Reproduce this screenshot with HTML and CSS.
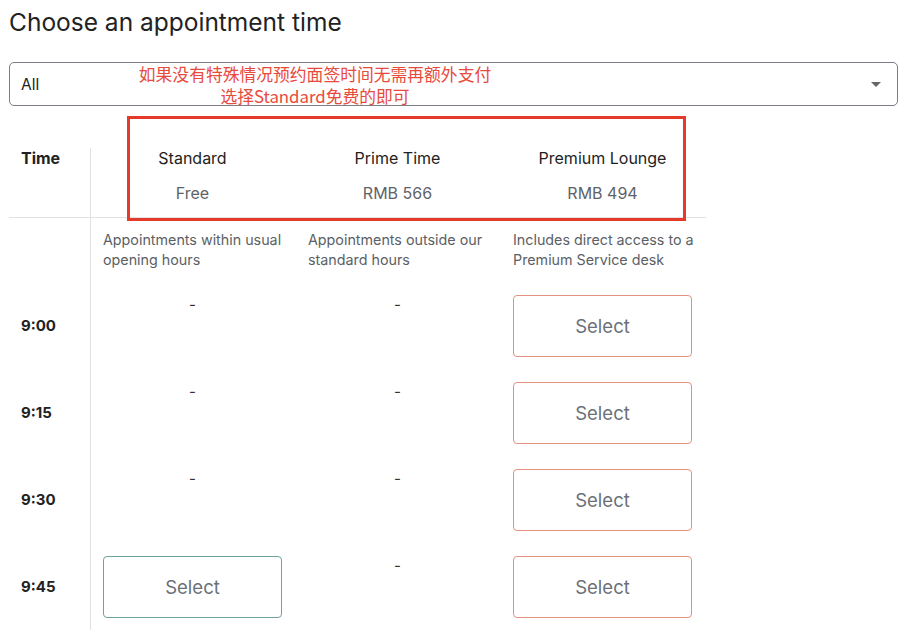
FILE: index.html
```html
<!DOCTYPE html>
<html lang="en">
<head>
<meta charset="utf-8">
<title>Choose an appointment time</title>
<link rel="stylesheet" href="styles.css">
</head>
<body>
<div class="page">
  <h1 class="title">Choose an appointment time</h1>
  <div class="select-wrap">
    <div class="select">
      <span class="select-value">All</span>
      <span class="caret"></span>
    </div>
    <div class="note">如果没有特殊情况预约面签时间无需再额外支付<br>选择Standard免费的即可</div>
  </div>

  <div class="table">
    <div class="highlight"></div>
    <div class="row head">
      <div class="tcell head-time">Time</div>
      <div class="cell head-cell"><div class="name">Standard</div><div class="price">Free</div></div>
      <div class="cell head-cell"><div class="name">Prime Time</div><div class="price">RMB 566</div></div>
      <div class="cell head-cell"><div class="name">Premium Lounge</div><div class="price">RMB 494</div></div>
    </div>
    <div class="row desc">
      <div class="tcell"></div>
      <div class="cell desc-cell">Appointments within usual opening hours</div>
      <div class="cell desc-cell">Appointments outside our standard hours</div>
      <div class="cell desc-cell">Includes direct access to a Premium Service desk</div>
    </div>
    <div class="row slot">
      <div class="tcell time">9:00</div>
      <div class="cell"><div class="dash">-</div></div>
      <div class="cell"><div class="dash">-</div></div>
      <div class="cell"><button class="btn btn-premium">Select</button></div>
    </div>
    <div class="row slot">
      <div class="tcell time">9:15</div>
      <div class="cell"><div class="dash">-</div></div>
      <div class="cell"><div class="dash">-</div></div>
      <div class="cell"><button class="btn btn-premium">Select</button></div>
    </div>
    <div class="row slot">
      <div class="tcell time">9:30</div>
      <div class="cell"><div class="dash">-</div></div>
      <div class="cell"><div class="dash">-</div></div>
      <div class="cell"><button class="btn btn-premium">Select</button></div>
    </div>
    <div class="row slot">
      <div class="tcell time">9:45</div>
      <div class="cell"><button class="btn btn-standard">Select</button></div>
      <div class="cell"><div class="dash">-</div></div>
      <div class="cell"><button class="btn btn-premium">Select</button></div>
    </div>
  </div>
</div>
</body>
</html>
```
FILE: styles.css
```css
* { box-sizing: border-box; }
html, body { margin: 0; padding: 0; background: #fff; }
body {
  font-family: Inter, "Noto Sans", "Liberation Sans", sans-serif;
  color: #222;
  width: 918px;
  height: 636px;
  overflow: hidden;
}
.page { padding: 0 9px; }
.title {
  margin: 8px 0 0;
  font-size: 24.5px;
  line-height: 29px;
  font-weight: 400;
  color: #222;
  letter-spacing: 0;
}
.select-wrap { position: relative; margin-top: 25px; width: 889px; }
.select {
  height: 44px;
  border: 1px solid #7b7f86;
  border-radius: 5px;
  display: flex;
  align-items: center;
  justify-content: space-between;
  padding: 0 16px 0 11px;
}
.select-value { font-size: 15.5px; color: #222; }
.caret {
  width: 0; height: 0;
  border-left: 5px solid transparent;
  border-right: 5px solid transparent;
  border-top: 5px solid #666;
}
.note {
  position: absolute;
  left: 81px;
  top: 1px;
  width: 450px;
  text-align: center;
  font-family: "Noto Sans CJK SC", "Noto Sans", sans-serif;
  font-size: 16.8px;
  line-height: 22px;
  color: #e84a3c;
}
.table { position: relative; margin-top: 42px; width: 697px; }
.highlight {
  position: absolute;
  left: 118px;
  top: -32px;
  width: 559px;
  height: 105px;
  border: 3px solid #e5392a;
  pointer-events: none;
}
.row { display: grid; grid-template-columns: 82px 205px 205px 205px; }
.tcell { border-right: 1px solid #e0e0e0; padding-left: 12px; }
.cell { padding: 0 14px 0 12px; }
.head { border-bottom: 1px solid #e2e2e2; height: 70px; }
.head-time { font-weight: 700; font-size: 16px; line-height: 20px; }
.head-cell { text-align: center; font-size: 16px; line-height: 20px; }
.name { color: #222; }
.price { color: #5f6368; margin-top: 15px; }
.desc { height: 64px; }
.cell.desc-cell { padding: 12px 4px 0 12px; font-size: 14.3px; line-height: 20px; color: #5b5f66; }
.slot { height: 87px; }
.slot .cell { padding-top: 13px; }
.time { font-weight: 700; font-size: 15px; display: flex; align-items: center; }
.dash { text-align: center; font-size: 15px; line-height: 20px; color: #333; }
.btn {
  display: block;
  width: 179px;
  height: 62px;
  background: #fff;
  border-radius: 4px;
  font-family: Inter, "Noto Sans", sans-serif;
  font-size: 18.5px;
  color: #6b7078;
  cursor: pointer;
}
.btn-premium { border: 1.5px solid #e2917f; }
.btn-standard { border: 1.5px solid #6fa39d; }
```
